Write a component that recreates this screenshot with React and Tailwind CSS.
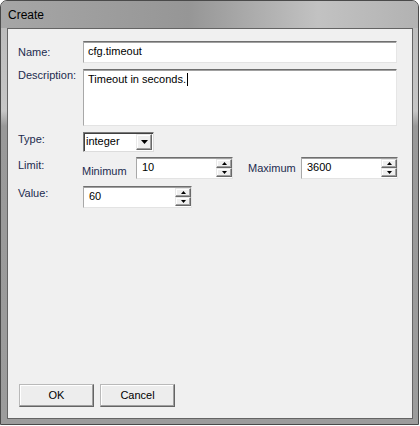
import React from "react";

const font = { fontFamily: '"Liberation Sans", Arial, sans-serif' };

function Field({ className = "", children }) {
  return (
    <div
      className={`bg-white border-t border-l border-r border-b border-t-[#6f6f6f] border-l-[#a8a8a8] border-r-[#e6e6e6] border-b-[#e3e3e3] shadow-[inset_0_1px_0_#a0a0a0] ${className}`}
    >
      {children}
    </div>
  );
}

function Arrow({ up }) {
  return (
    <svg width="5" height="3" viewBox="0 0 5 3" className="block">
      {up ? <path d="M2.5 0 L5 3 L0 3 Z" fill="#000" /> : <path d="M0 0 L5 0 L2.5 3 Z" fill="#000" />}
    </svg>
  );
}

function SpinBtn({ up }) {
  return (
    <div className="flex-1 flex items-center justify-center bg-[#efefef] border border-t-[#e8e8e8] border-l-[#e8e8e8] border-r-[#696969] border-b-[#696969] shadow-[inset_-1px_-1px_0_#a0a0a0,inset_1px_1px_0_#ffffff]">
      <Arrow up={up} />
    </div>
  );
}

function Spinner({ w, value }) {
  return (
    <Field className={`${w} h-[22px] flex items-stretch`}>
      <div className="flex-1 pl-[5px] pt-[3px] text-[11px] text-black leading-[13px]">{value}</div>
      <div className="w-[16px] flex flex-col py-[1px] mr-[0px]">
        <SpinBtn up />
        <SpinBtn />
      </div>
    </Field>
  );
}

function Label({ className = "", children }) {
  return <div className={`text-[11px] leading-[13px] text-[#1c2b4f] ${className}`}>{children}</div>;
}

function Button({ children }) {
  return (
    <div className="w-[75px] h-[23px] flex items-center justify-center text-[11px] text-black bg-[#ededed] border border-t-[#b9b9b9] border-l-[#b9b9b9] border-r-[#646464] border-b-[#646464] shadow-[inset_-1px_-1px_0_#a0a0a0,inset_1px_1px_0_#ffffff]">
      {children}
    </div>
  );
}

export default function App() {
  return (
    <div className="w-[420px] h-[426px] bg-white" style={font}>
      <div className="w-[419px] h-[425px] rounded-t-[7px] border border-[#4a4a4a] flex flex-col overflow-hidden bg-[linear-gradient(to_bottom,#b9b9b9_0px,#c6c6c6_110px,#999999_125px,#9c9c9c_100%)]">
        <div className="h-[27px] shrink-0 pl-[7px] flex items-center text-[12px] text-black bg-[linear-gradient(to_right,#a6a6a6_0%,#969696_45%,#c2c2c2_76%,#b2b2b2_100%)]">
          Create
        </div>
        <div className="flex-1 ml-[6px] mr-[5px] mb-[5px] border border-[#646464] bg-[#f0f0f0] flex flex-col pl-[10px] pt-[12px] pb-[11px]">
          {/* Name */}
          <div className="flex h-[22px]">
            <Label className="w-[65px] pt-[5px]">Name:</Label>
            <Field className="w-[314px] h-[22px] pl-[4px] pt-[3px] text-[11px] leading-[13px] text-black">cfg.timeout</Field>
          </div>
          {/* Description */}
          <div className="flex mt-[6px]">
            <Label className="w-[65px] pt-[0px]">Description:</Label>
            <Field className="w-[314px] h-[57px] pl-[4px] pt-[3px] text-[11px] leading-[13px] text-black">
              <span>Timeout in seconds.</span>
              <span className="inline-block w-[1px] h-[13px] bg-black align-top ml-[1px]" />
            </Field>
          </div>
          {/* Type */}
          <div className="flex mt-[6px]">
            <Label className="w-[65px] pt-[1px]">Type:</Label>
            <div className="w-[71px] h-[20px] bg-white border border-t-[#7a7a7a] border-l-[#7a7a7a] border-r-[#dcdcdc] border-b-[#dcdcdc] shadow-[inset_1px_1px_0_#404040] flex items-stretch">
              <div className="flex-1 pl-[2px] pt-[2px] text-[11px] leading-[13px] text-black">integer</div>
              <div className="w-[16px] my-[1px] mr-[1px] flex items-center justify-center bg-[#efefef] border border-t-[#e8e8e8] border-l-[#e8e8e8] border-r-[#696969] border-b-[#696969] shadow-[inset_-1px_-1px_0_#a0a0a0,inset_1px_1px_0_#ffffff]">
                <svg width="7" height="4" viewBox="0 0 7 4" className="block">
                  <path d="M0 0 L7 0 L3.5 4 Z" fill="#000" />
                </svg>
              </div>
            </div>
          </div>
          {/* Limit */}
          <div className="flex mt-[5px]">
            <Label className="w-[64px] pt-[2px]">Limit:</Label>
            <Label className="w-[54px] pt-[8px]">Minimum</Label>
            <Spinner w="w-[97px]" value="10" />
            <Label className="ml-[15px] w-[53px] pt-[5px]">Maximum</Label>
            <Spinner w="w-[97px]" value="3600" />
          </div>
          {/* Value */}
          <div className="flex mt-[7px]">
            <Label className="w-[65px] pt-[1px]">Value:</Label>
            <Spinner w="w-[109px]" value="60" />
          </div>
          <div className="flex-1" />
          <div className="flex gap-[6px] pl-[1px]">
            <Button>OK</Button>
            <Button>Cancel</Button>
          </div>
        </div>
      </div>
    </div>
  );
}
